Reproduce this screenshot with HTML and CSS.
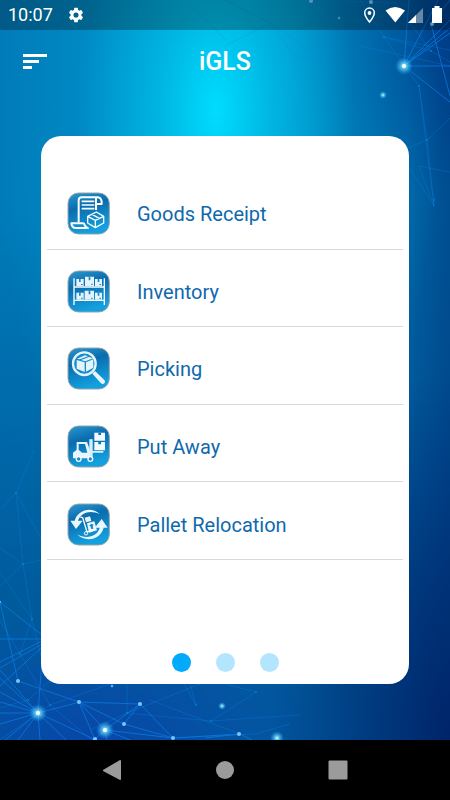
FILE: index.html
```html
<!DOCTYPE html>
<html lang="en">
<head>
  <meta charset="UTF-8">
  <meta name="viewport" content="width=device-width, initial-scale=1.0">
  <title>iGLS</title>
  <link rel="stylesheet" href="styles.css">
</head>
<body>
  <div class="screen">
    <!-- network lines behind the content -->
    <svg class="network" viewBox="0 0 450 740" preserveAspectRatio="xMidYMid slice" aria-hidden="true">
      <defs>
        <radialGradient id="glow">
          <stop offset="0" stop-color="#fff"/>
          <stop offset=".25" stop-color="#7fe8ff" stop-opacity=".8"/>
          <stop offset="1" stop-color="#20b0ff" stop-opacity="0"/>
        </radialGradient>
      </defs>
      <g class="lines">
        <path d="M404 66L409 0M404 66L450 20M404 66L450 28M404 66L450 33M404 66L438 0M404 66L450 66M404 66L450 102M431 24L450 96M431 24L450 0"/>
        <path d="M38 713L0 678M38 713L0 692M38 713L0 702M38 713L0 713M38 713L0 724M38 713L5 740M38 713L18 740M38 713L40 740M38 713L66 740M38 713L96 740M38 713L80 702M38 713L42 660M38 713L0 670"/>
        <path d="M0 602L18 681L79 702L140 704L105 730L79 702L95 740M79 702L124 724L173 738L240 734M140 704L173 738L105 730M124 724L140 704M105 730L94 740M105 730L107 740M105 730L130 740M0 602L42 635M0 639H42M0 662L42 641M0 668L42 644M0 686L42 647M240 734L252 740M240 734L205 738"/>
      </g>
      <g class="lines faint">
        <path d="M404 66L419 86L427 140L450 118M419 86L434 206L419 166L450 172M404 66L384 37L360 0M384 37L431 51L450 62M384 37L450 50M431 51L395 3L311 0M360 46L450 66M427 140L434 206L408 166M427 140L408 148M323 60L295 57L270 23L225 0M225 46L271 23L323 60M195 10L226 40"/>
        <path d="M0 586L23 564L42 560M23 564L16 493L42 540M23 564L32 619L0 572M32 619L20 654L0 620M32 619L42 660M20 654L50 705L92 740M28 700L0 708M28 700L60 672M50 705L0 740M50 705L110 684M127 684V713L90 730M127 713L200 684M184 684L196 705L190 684M127 713L211 721L300 715M211 721L256 692L225 684M150 700L240 734M173 738L255 734L290 724M0 548L23 564M0 510L16 493L34 450"/>
      </g>
      <g class="nodes">
        <circle cx="18" cy="681" r="2"/><circle cx="79" cy="702" r="2"/><circle cx="140" cy="704" r="2"/>
        <circle cx="124" cy="724" r="2"/><circle cx="95" cy="739" r="2"/><circle cx="173" cy="738" r="2"/>
        <circle cx="239" cy="734" r="2"/><circle cx="371" cy="2" r="2"/><circle cx="311" cy="1" r="2"/>
        <circle cx="432" cy="24" r="2"/><circle cx="0" cy="602" r="1"/>
      </g>
      <g class="nodes dim">
        <circle cx="23" cy="564" r="1"/><circle cx="32" cy="619" r="1"/><circle cx="20" cy="654" r="1"/>
        <circle cx="50" cy="705" r="1"/><circle cx="28" cy="700" r="1"/><circle cx="127" cy="713" r="1"/>
        <circle cx="196" cy="705" r="1"/><circle cx="211" cy="721" r="1"/><circle cx="256" cy="692" r="1"/>
        <circle cx="323" cy="60" r="1"/><circle cx="384" cy="37" r="1"/><circle cx="431" cy="51" r="1"/>
        <circle cx="419" cy="86" r="1"/><circle cx="427" cy="140" r="1"/><circle cx="434" cy="200" r="1"/>
        <circle cx="295" cy="57" r="1"/><circle cx="271" cy="23" r="1"/><circle cx="16" cy="493" r="1"/>
      </g>
      <g fill="url(#glow)">
        <circle cx="404" cy="66" r="9"/><circle cx="38" cy="713" r="9"/><circle cx="105" cy="730" r="9"/>
        <circle cx="383" cy="95" r="4"/><circle cx="339" cy="18" r="2"/><circle cx="222" cy="706" r="4"/>
        <circle cx="277" cy="738" r="7"/><circle cx="112" cy="686" r="2"/>
      </g>
      <g fill="#fff">
        <circle cx="404" cy="66" r="2"/><circle cx="38" cy="713" r="2"/><circle cx="105" cy="730" r="2"/>
      </g>
    </svg>

    <div class="status-bar">
      <span class="time">10:07</span>
      <svg class="gear" width="18" height="18" viewBox="0 0 24 24" fill="#fff" aria-hidden="true">
        <path d="M19.14 12.94c.04-.3.06-.61.06-.94s-.02-.64-.07-.94l2.03-1.58a.49.49 0 0 0 .12-.61l-1.92-3.32a.49.49 0 0 0-.59-.22l-2.39.96a7 7 0 0 0-1.62-.94l-.36-2.54a.48.48 0 0 0-.48-.41h-3.84a.47.47 0 0 0-.47.41l-.36 2.54c-.59.24-1.13.57-1.62.94l-2.39-.96a.47.47 0 0 0-.59.22L2.74 8.87a.47.47 0 0 0 .12.61l2.03 1.58c-.05.3-.09.63-.09.94s.02.64.07.94l-2.03 1.58a.49.49 0 0 0-.12.61l1.92 3.32c.12.22.37.29.59.22l2.39-.96c.5.38 1.03.7 1.62.94l.36 2.54c.05.24.24.41.48.41h3.84c.24 0 .44-.17.47-.41l.36-2.54a7 7 0 0 0 1.62-.94l2.39.96c.22.08.47 0 .59-.22l1.92-3.32a.47.47 0 0 0-.12-.61zM12 15.4a3.4 3.4 0 1 1 0-6.8 3.4 3.4 0 0 1 0 6.8z"/>
      </svg>
      <svg class="status-icons" width="80" height="18" viewBox="362 6 80 18" aria-hidden="true">
        <path d="M369.500 8a4.800 4.800 0 0 0-4.800 4.800c0 3.500 4.800 9.200 4.800 9.200s4.800-5.700 4.800-9.200A4.800 4.800 0 0 0 369.500 8z" fill="none" stroke="#fff" stroke-width="1.500"/>
        <circle cx="369.500" cy="13" r="1.900" fill="#fff"/>
        <path d="M385.500 10.500Q395 3.500 405 10.500L395.300 22.500z" fill="#fff"/>
        <path d="M423 8v15h-15z" fill="#fff" opacity=".4"/>
        <path d="M416 15v8h-8z" fill="#fff"/>
        <path d="M434.500 6h5v2h2.500v15h-10V8h2.500z" fill="#fff"/>
      </svg>
    </div>

    <header>
      <button class="menu" type="button" aria-label="Menu">
        <svg width="24" height="18" viewBox="0 0 24 18" fill="#fff" aria-hidden="true">
          <path d="M0 1h24v3H0zM0 7h16v3H0zM0 13h9v3H0z"/>
        </svg>
      </button>
      <h1>iGLS</h1>
    </header>

    <main>
      <ul class="menu-list">
        <li><a href="#receipt">
          <svg class="icon" viewBox="22 22 132 132" aria-hidden="true">
            <defs>
              <linearGradient id="tile" x1="0" y1="0" x2=".3" y2="1">
                <stop offset="0" stop-color="#2a9ad0"/>
                <stop offset=".4" stop-color="#0a6cae"/>
                <stop offset="1" stop-color="#12a0df"/>
              </linearGradient>
            </defs>
            <rect class="tile" x="25" y="25" width="124" height="123" rx="32"/>
            <g fill="none" stroke="#fff" stroke-width="6" stroke-linejoin="round">
              <path d="M57 113V47q0-9 9-9h49q12 1 11 20l-17-1V39M109 57V76"/>
              <path d="M80 130H49q-12 0-14-14h35q4 0 6 7 4 8 11 7"/>
              <path d="M66 50h38M66 61h38M66 72h38" stroke-width="5"/>
              <path d="M84 95l26-13 22 13v20l-25 14-23-14zM84 95l23 12 25-12M107 107v21M97 89l22 12" stroke-width="4"/>
            </g>
          </svg>
          <span>Goods Receipt</span></a></li>
        <li><a href="#inventory">
          <svg class="icon" viewBox="22 22 132 132" aria-hidden="true">
            <rect class="tile" x="25" y="25" width="124" height="123" rx="32"/>
            <path d="M41 47h4v24h87V47h4v80h-4v-12H45v12h-4zM45 75v36h87V75z" fill="#fff" fill-rule="evenodd"/>
            <g fill="#e4f3fc">
              <path d="M50 49h22v21H50zM76 42h27v28H76zM106 49h21v21h-21zM50 90h22v21H50zM75 84h28v27H75zM106 90h21v21h-21z"/>
            </g>
            <g fill="#1686c5">
              <path d="M58 49h5v9h-5zM87 42h5v11h-5zM114 49h5v9h-5zM58 90h5v9h-5zM87 84h5v11h-5zM114 90h5v9h-5z"/>
              <path d="M64 64h5v3h-5zM94 63h5v3h-5zM119 64h5v3h-5zM64 105h5v3h-5zM94 105h5v3h-5zM119 105h5v3h-5z"/>
            </g>
          </svg>
          <span>Inventory</span></a></li>
        <li><a href="#picking">
          <svg class="icon" viewBox="22 22 132 132" aria-hidden="true">
            <rect class="tile" x="25" y="25" width="124" height="123" rx="32"/>
            <circle cx="74" cy="72" r="34" fill="#168aca" stroke="#e4f4fd" stroke-width="7"/>
            <path d="M98 102l8-8 28 27q5 5 0 10t-10 0z" fill="#e7f6ff"/>
            <path d="M51 61l24 7v29l-24-10zM79 68l22-9v25l-22 12zM52 57l24-10 9 3-25 9zM64 61l24-9 13 4-24 9z" fill="#e4f4fd"/>
          </svg>
          <span>Picking</span></a></li>
        <li><a href="#put-away">
          <svg class="icon" viewBox="22 22 132 132" aria-hidden="true">
            <rect class="tile" x="25" y="25" width="124" height="123" rx="32"/>
            <path d="M40 105l11-9V73h31l9 25v24H40zM57 79v17l10 9h16l-7-26z" fill="#e7f6ff" fill-rule="evenodd"/>
            <path d="M89 65h10v35h32v5H99v17H89z" fill="#d8effb"/>
            <circle cx="57" cy="124" r="7" fill="#1687c6" stroke="#fff" stroke-width="4"/>
            <circle cx="92" cy="124" r="7" fill="#1687c6" stroke="#fff" stroke-width="4"/>
            <path d="M104 45h32v24h-32zM104 73h32v25h-32z" fill="#f2faff"/>
            <path d="M116 45h8v7h-8zM116 73h8v7h-8z" fill="#0874b4"/>
          </svg>
          <span>Put Away</span></a></li>
        <li><a href="#relocation">
          <svg class="icon" viewBox="22 22 132 132" aria-hidden="true">
            <rect class="tile" x="25" y="25" width="124" height="123" rx="32"/>
            <g fill="#e9f7ff">
              <path d="M121 56C94 31 55 43 45 75H32l17 25 20-25H55C64 51 92 41 121 56z"/>
              <path d="M52 116c28 27 72 14 80-20h12l-18-26-21 26h15c-6 26-39 36-68 20z"/>
              <path d="M82 83l22-6 8 27-24 7zM75 66l16-4 4 14-16 4z"/>
            </g>
            <path d="M62 64l7 2 13 43 25-7" fill="none" stroke="#fff" stroke-width="4"/>
            <circle cx="79" cy="113" r="5" fill="#1687c6" stroke="#fff" stroke-width="3"/>
            <path d="M95 100l-3-9h-4l7-7 8 4-4 2 2 9z" fill="#1687c6"/>
          </svg>
          <span>Pallet Relocation</span></a></li>
      </ul>
      <div class="pager">
        <button class="dot active" type="button" aria-label="Page 1"></button>
        <button class="dot" type="button" aria-label="Page 2"></button>
        <button class="dot" type="button" aria-label="Page 3"></button>
      </div>
    </main>
  </div>

  <nav class="system-nav">
    <button type="button" aria-label="Back">
      <svg width="20" height="20" viewBox="0 0 20 20" fill="#9b9b9b" aria-hidden="true"><path d="M1 10L18 0q1 0 1 1v18q0 1-1 1L1 11z"/></svg>
    </button>
    <button type="button" aria-label="Home">
      <svg width="20" height="20" viewBox="0 0 20 20" fill="#9b9b9b" aria-hidden="true"><circle cx="10" cy="10" r="9"/></svg>
    </button>
    <button type="button" aria-label="Recent apps">
      <svg width="20" height="20" viewBox="0 0 20 20" fill="#9b9b9b" aria-hidden="true"><rect x=".5" y=".5" width="19" height="19" rx="1"/></svg>
    </button>
  </nav>
</body>
</html>
```

FILE: styles.css
```css
* { margin: 0; padding: 0; box-sizing: border-box; }
body {
  font-family: Roboto, sans-serif;
  background: #000;
  color: #fff;
  min-height: 100vh;
  display: flex;
  flex-direction: column;
}
button { background: none; border: none; cursor: pointer; display: block; }
svg { display: block; }

.screen {
  position: relative;
  flex: 1;
  display: flex;
  flex-direction: column;
  overflow: hidden;
  background:
    radial-gradient(ellipse 50% 62% at 48% 15%, #00dcff 0%, rgba(0,200,240,0.75) 25%, rgba(0,165,220,0.3) 62%, rgba(0,140,200,0) 100%),
    radial-gradient(ellipse 60% 18% at 20% 100%, rgba(10,66,170,0.8), rgba(10,66,170,0) 100%),
    radial-gradient(ellipse 40% 50% at 100% 100%, rgba(0,25,95,0.75), rgba(0,35,105,0) 100%),
    radial-gradient(ellipse 36% 22% at 100% 5%, rgba(0,50,130,0.6), rgba(0,50,130,0) 100%),
    linear-gradient(to bottom, rgba(0,60,130,0) 30%, rgba(0,60,130,0.5) 80%),
    linear-gradient(to right, #007ab8 0%, #007fb8 55%, #0062a3 91%, #004d90 100%);
}

.network { position: absolute; top: 0; left: 0; width: 100%; height: 100%; }
.lines { fill: none; stroke: #0b83ee; stroke-width: 1; opacity: 0.65; }
.faint { opacity: 0.3; }
.nodes { fill: #7cc4ff; }
.dim { fill: #00a5c8; opacity: 0.5; }

.status-bar, header, main { position: relative; }
.status-bar {
  height: 30px;
  padding: 0 8px;
  display: flex;
  align-items: center;
  background: rgba(0,0,0,0.27);
}
.time { font-size: 18px; line-height: 32px; }
.gear { margin-left: 14px; }
.status-icons { margin-left: auto; }

header {
  height: 64px;
  padding: 0 23px;
  display: grid;
  grid-template-columns: 1fr auto 1fr;
  align-items: center;
}
.menu { width: 24px; }
h1 { font-size: 25px; font-weight: 500; line-height: 30px; }

main {
  flex: 1;
  margin: 42px 41px 56px;
  padding: 36px 6px 12px;
  background: #fff;
  border-radius: 20px;
  display: flex;
  flex-direction: column;
}
.menu-list { list-style: none; flex: 1; display: flex; flex-direction: column; }
.menu-list li { flex: 1; display: flex; border-bottom: 1px solid #d9d9d9; }
.menu-list a {
  flex: 1;
  display: flex;
  align-items: center;
  gap: 26px;
  padding: 8px 20px 0;
  color: #0f69ad;
  font-size: 20px;
  line-height: 24px;
  text-decoration: none;
}
.icon { width: 44px; height: 44px; }
.tile { fill: url(#tile); stroke: #9aa4ab; stroke-width: 3; }

.pager { display: flex; justify-content: center; gap: 25px; padding-top: 93px; }
.dot { width: 19px; height: 19px; border-radius: 50%; background: #b3e5ff; }
.dot.active { background: #03a9fa; }

.system-nav {
  height: 60px;
  background: #000;
  display: flex;
  justify-content: center;
  align-items: center;
  gap: 93px;
}
```
